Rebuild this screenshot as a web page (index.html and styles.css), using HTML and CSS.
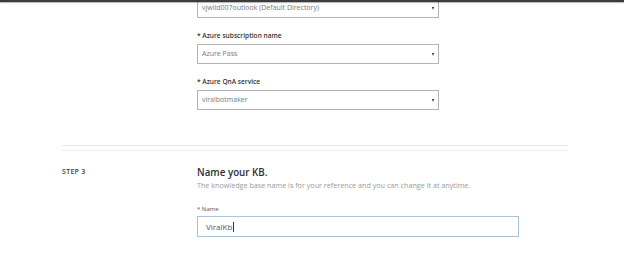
FILE: index.html
```html
<!DOCTYPE html>
<html lang="en">
<head>
<meta charset="utf-8">
<title>Create KB</title>
<link rel="stylesheet" href="styles.css">
</head>
<body>
<div class="topbar"></div>
<main class="page">
  <section class="fields">
    <div class="select first"><span class="value">vjwild007outlook (Default Directory)</span><span class="arrow"></span></div>
    <div class="field">
      <div class="label">* Azure subscription name</div>
      <div class="select"><span class="value">Azure Pass</span><span class="arrow"></span></div>
    </div>
    <div class="field">
      <div class="label">* Azure QnA service</div>
      <div class="select"><span class="value">viralbotmaker</span><span class="arrow"></span></div>
    </div>
  </section>
  <div class="sep"></div>
  <section class="step">
    <div class="step-label">STEP 3</div>
    <div class="step-body">
      <h2 class="title">Name your KB.</h2>
      <p class="subtitle">The knowledge base name is for your reference and you can change it at anytime.</p>
      <div class="name-label">* Name</div>
      <div class="input"><span class="input-text">ViralKb</span><span class="caret"></span></div>
    </div>
  </section>
</main>
</body>
</html>
```
FILE: styles.css
```css
html, body {
  margin: 0;
  padding: 0;
  background: #ffffff;
}
body {
  font-family: "Open Sans", "Noto Sans", "DejaVu Sans", sans-serif;
  color: #333;
}
.topbar {
  position: fixed;
  top: 0;
  left: 0;
  right: 0;
  height: 2px;
  background: #3c3c3c;
  box-shadow: 0 1px 1px rgba(0,0,0,0.3);
  z-index: 2;
}
.page {
  margin-left: 62px;
  width: 506px;
}
.fields {
  padding-left: 135px;
}
.select {
  box-sizing: border-box;
  width: 242px;
  height: 20px;
  border: 1px solid #b4b4b4;
  background: #fff;
  display: flex;
  align-items: center;
  justify-content: space-between;
  padding: 0 4px 0 4px;
}
.select.first {
  margin-top: -2px;
}
.value {
  font-size: 7px;
  color: #7a7a7a;
  line-height: 10px;
}
.arrow {
  width: 0;
  height: 0;
  border-left: 1.5px solid transparent;
  border-right: 1.5px solid transparent;
  border-top: 3px solid #222;
}
.field {
  margin-top: 13px;
}
.label {
  font-size: 6.6px;
  font-weight: 600;
  color: #333;
  line-height: 10px;
  margin-bottom: 3px;
}
.sep {
  margin-top: 35px;
  height: 4px;
  border-top: 1px solid #e6e6e6;
  border-bottom: 1px solid #f1f1f1;
}
.step {
  display: flex;
  margin-top: 15px;
}
.step-label {
  width: 135px;
  flex: none;
  font-size: 7px;
  font-weight: 600;
  letter-spacing: 0.3px;
  color: #444;
  line-height: 10px;
  margin-top: 1px;
}
.step-body {
  flex: 1;
}
.title {
  margin: 0;
  font-size: 9.8px;
  font-weight: 600;
  color: #2e2e2e;
  line-height: 14px;
}
.subtitle {
  margin: 0;
  font-size: 7.2px;
  color: #9a9a9a;
  line-height: 10px;
}
.name-label {
  margin-top: 14px;
  font-size: 6px;
  color: #555;
  line-height: 10px;
  margin-bottom: 2px;
}
.input {
  box-sizing: border-box;
  width: 322px;
  height: 21px;
  border: 1px solid #a8c4d8;
  display: flex;
  align-items: center;
  padding-left: 8px;
}
.input-text {
  font-size: 8px;
  color: #555;
  line-height: 10px;
}
.caret {
  width: 1px;
  height: 10px;
  background: #333;
  margin-left: 1px;
}
```
